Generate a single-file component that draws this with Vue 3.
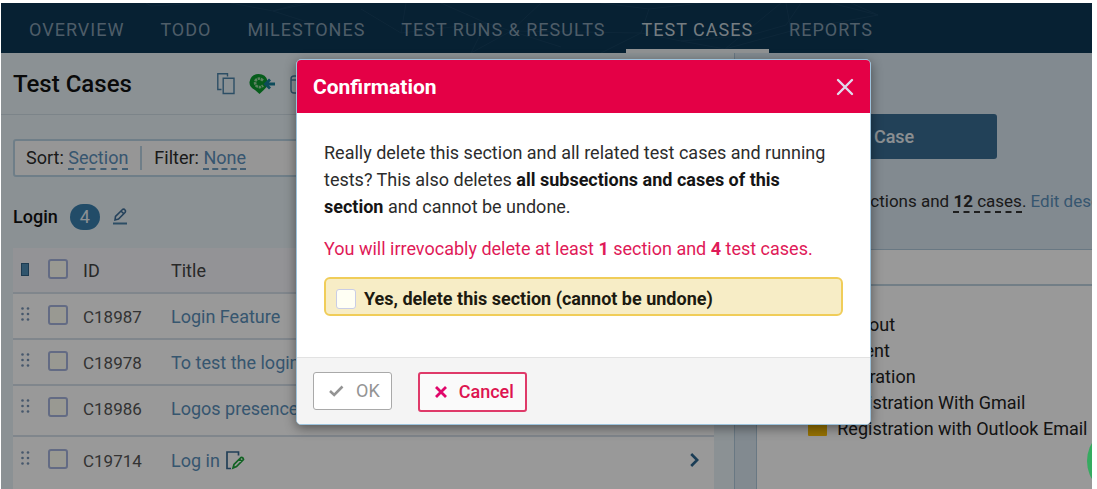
<script setup>
import { ref } from 'vue'

const navItems = [
  { label: 'Overview' },
  { label: 'Todo' },
  { label: 'Milestones' },
  { label: 'Test Runs & Results' },
  { label: 'Test Cases', active: true },
  { label: 'Reports' },
]

const cases = [
  { id: 'C18987', title: 'Login Feature' },
  { id: 'C18978', title: 'To test the login form' },
  { id: 'C18986', title: 'Logos presence on page', tall: true },
  { id: 'C19714', title: 'Log in', edited: true, tall: true, open: true },
]

const tree = [
  { label: 'Login' },
  { label: 'Checkout' },
  { label: 'Payment' },
  { label: 'Registration' },
  { label: 'Registration With Gmail', child: true },
  { label: 'Registration with Outlook Email', child: true },
]

const confirmed = ref(false)
</script>

<template>
  <div class="page">
    <div class="frame">
      <header class="topbar">
        <svg class="mesh" viewBox="0 0 1091 50" preserveAspectRatio="none" aria-hidden="true">
          <path d="M145 0 L150 3 L200 0 M230 0 L272 8 L310 0 M272 8 L300 0 M272 8 L340 30 M360 6 L400 30 L485 20 L440 0 M400 30 L405 0 M485 20 L510 28 L540 0 M485 20 L470 50 L510 28 L560 44 M510 28 L640 30 L648 6 L600 0 M640 30 L600 50 M640 30 L680 38 L724 46 L780 0 M680 38 L750 32 L785 22 L800 0 M648 6 L700 0 M724 46 L790 28 L877 12 L830 0 M790 28 L785 0 M877 12 L850 0" />
        </svg>
        <nav class="nav">
          <a v-for="item in navItems" :key="item.label" href="#" :class="{ active: item.active }">{{ item.label }}</a>
        </nav>
      </header>

      <div class="columns">
        <main class="main">
          <div class="titlebar">
            <h1>Test Cases</h1>
            <div class="tools">
              <button type="button" aria-label="Copy cases">
                <svg width="18" height="22" viewBox="0 0 18 22" fill="none" stroke="#4a82a8" stroke-width="1.4">
                  <path d="M4.5 16.5H.8V.8H10.5V3.5" />
                  <path d="M6.2 5.2H17V20.5H6.2z" />
                </svg>
              </button>
              <button type="button" aria-label="Import cases">
                <svg width="27" height="22" viewBox="0 0 27 22">
                  <path d="M9.500 1 Q17 1 18.500 8 L18.500 13 Q15 17 10.500 21 L6 17 Q0 14 .5 9 Q2 1 9.500 1z" fill="#0b9c2e" />
                  <path d="M14 7.500 Q10 4 7 7 Q5 10 7.500 13 Q11 15.500 14 12.500" fill="none" stroke="#9bd8a2" stroke-width="2.600" stroke-dasharray="2.500 .8" />
                  <path d="M26 11H17M21 6.500L16.500 11L21 15.500" fill="none" stroke="#177d98" stroke-width="2.800" />
                </svg>
              </button>
              <button type="button" aria-label="Export cases">
                <svg width="18" height="20" viewBox="0 0 18 20" fill="none" stroke="#4a82a8" stroke-width="1.400">
                  <rect x="1" y="2" width="16" height="17" rx="3" />
                  <path d="M1 6H17" />
                </svg>
              </button>
            </div>
          </div>

          <div class="content">
            <div class="filterbar">
              <span>Sort: <a href="#">Section</a></span>
              <span class="filter">Filter: <a href="#">None</a></span>
            </div>

            <div class="section-head">
              <h2>Login</h2>
              <span class="count">4</span>
              <button type="button" aria-label="Edit section">
                <svg width="16" height="17" viewBox="0 0 16 17" fill="none" stroke="#3f6f99" stroke-width="1.600">
                  <path d="M3 12 L3.500 8.500 L10.500 1.500 Q12 .500 13 2 Q14 3 13 4.500 L6.500 11 L3 12z M9 3 L11.500 5.500" />
                  <path d="M1 15.500H15" stroke="#4a82a8" stroke-width="2" />
                </svg>
              </button>
            </div>

            <table>
              <colgroup>
                <col class="c-drag" /><col class="c-check" /><col class="c-id" /><col /><col class="c-go" />
              </colgroup>
              <thead>
                <tr>
                  <th><i class="column-mark"></i></th>
                  <th><input type="checkbox" aria-label="Select all cases" /></th>
                  <th>ID</th>
                  <th>Title</th>
                  <th></th>
                </tr>
              </thead>
              <tbody>
                <tr v-for="c in cases" :key="c.id" :class="{ tall: c.tall, open: c.open }">
                  <td>
                    <svg class="grip" width="9" height="14" viewBox="0 0 9 14" fill="#7793b5">
                      <circle cx="1.500" cy="1.500" r="1.300" /><circle cx="7" cy="1.500" r="1.300" />
                      <circle cx="1.500" cy="7" r="1.300" /><circle cx="7" cy="7" r="1.300" />
                      <circle cx="1.500" cy="12.500" r="1.300" /><circle cx="7" cy="12.500" r="1.300" />
                    </svg>
                  </td>
                  <td><input type="checkbox" :aria-label="'Select ' + c.id" /></td>
                  <td class="id">{{ c.id }}</td>
                  <td>
                    <a href="#">{{ c.title }}</a>
                    <svg v-if="c.edited" class="note" width="19" height="19" viewBox="0 0 19 19" fill="none">
                      <path d="M5 17.500H1V1H12.500V4.500" stroke="#3a6a92" stroke-width="1.700" />
                      <path d="M7 17 L8 13.500 L15 6.500 Q17 6 17.500 8.500 L10.500 15.500 L7 17z M13.500 8 L16 10.500" stroke="#1ca53a" stroke-width="1.700" />
                    </svg>
                  </td>
                  <td>
                    <svg v-if="c.open" class="chevron" width="9" height="14" viewBox="0 0 9 14" fill="none" stroke="#2c668f" stroke-width="2.600">
                      <path d="M1.200 1 L7.200 7 L1.200 13" />
                    </svg>
                  </td>
                </tr>
              </tbody>
            </table>
          </div>
        </main>

        <aside class="side">
          <button type="button" class="add">Add Test Case</button>
          <p class="stats">Contains 3 sections and <a class="total" href="#"><b>12</b> cases</a>. <a href="#">Edit description</a></p>
          <div class="tree">
            <div class="tree-head"></div>
            <ul>
              <li v-for="n in tree" :key="n.label" :class="{ child: n.child }">
                <i class="folder"></i>{{ n.label }}
              </li>
            </ul>
          </div>
        </aside>
      </div>

      <div class="backdrop">
        <form class="dialog" role="dialog" aria-modal="true" aria-labelledby="dialog-title" @submit.prevent>
          <div class="dialog-head">
            <h2 id="dialog-title">Confirmation</h2>
            <button type="button" aria-label="Close">
              <svg width="18" height="18" viewBox="0 0 18 18" fill="none" stroke="#dfd9ec" stroke-width="2.400" stroke-linecap="round">
                <path d="M2 2 L16 16 M16 2 L2 16" />
              </svg>
            </button>
          </div>
          <div class="dialog-body">
            <p>Really delete this section and all related test cases and running tests? This also deletes <b>all subsections and cases of this section</b> and cannot be undone.</p>
            <p class="warn">You will irrevocably delete at least <b>1</b> section and <b>4</b> test cases.</p>
            <label class="confirm">
              <input v-model="confirmed" type="checkbox" />
              Yes, delete this section (cannot be undone)
            </label>
          </div>
          <div class="dialog-foot">
            <button type="submit" class="ok" :disabled="!confirmed">
              <svg width="15" height="12" viewBox="0 0 15 12" fill="none" stroke="#949494" stroke-width="2.600">
                <path d="M1 6 L5.200 10 L13.500 1.500" />
              </svg>
              OK
            </button>
            <button type="button" class="cancel">
              <svg width="12" height="12" viewBox="0 0 12 12" fill="none" stroke="#e0066a" stroke-width="2.800">
                <path d="M1 1 L11 11 M11 1 L1 11" />
              </svg>
              Cancel
            </button>
          </div>
        </form>
      </div>

      <button type="button" class="chat" aria-label="Open chat"></button>
    </div>
  </div>
</template>

<style>
body {
  background: #fff;
}
</style>

<style scoped>
* {
  box-sizing: border-box;
}

.page {
  height: 100vh;
  padding: 3px 5px 0 1px;
  font-family: Roboto, "Liberation Sans", sans-serif;
  font-size: 18px;
  line-height: 24px;
  color: #2c2c2c;
}

.frame {
  position: relative;
  display: flex;
  flex-direction: column;
  height: 100%;
  overflow: hidden;
}

h1,
h2,
p,
ul {
  margin: 0;
  padding: 0;
}

button {
  padding: 0;
  border: 0;
  background: none;
  font: inherit;
  cursor: pointer;
}

svg {
  display: block;
}

a {
  color: #5b8fba;
  text-decoration: none;
}

input[type='checkbox'] {
  appearance: none;
  display: block;
  width: 20px;
  height: 20px;
  margin: 0;
  border: 2px solid #a5b3dc;
  border-radius: 3px;
  background: #fffff4;
}

.topbar {
  position: relative;
  flex: none;
  background: #0d3755;
}

.mesh {
  position: absolute;
  inset: 0;
  width: 100%;
  height: 100%;
  fill: none;
  stroke: #2a5878;
  stroke-width: 1;
  opacity: 0.3;
}

.nav {
  position: relative;
  display: flex;
  gap: 4px;
  padding-left: 12px;
}

.nav a {
  height: 50px;
  padding: 15px 16px 0;
  border-bottom: 4px solid transparent;
  color: #829bae;
  letter-spacing: 1px;
  text-transform: uppercase;
  white-space: nowrap;
}

.nav a.active {
  border-color: #f0f4f6;
  color: #c3d0d8;
}

.columns {
  display: grid;
  grid-template-columns: minmax(0, 2.05fr) minmax(0, 1fr);
  flex: 1;
  min-height: 0;
}

.main {
  background: #e8f2f7;
}

.titlebar {
  display: flex;
  align-items: center;
  gap: 85px;
  height: 62px;
  padding-left: 12px;
  border-bottom: 1px solid #cfdde4;
}

h1 {
  font-size: 24px;
  font-weight: 500;
  color: #111;
}

.tools {
  display: flex;
  align-items: center;
  gap: 14px;
}

.content {
  padding: 24px 20px 0 12px;
}

.filterbar {
  display: flex;
  align-items: center;
  height: 38px;
  padding: 0 11px;
  border: 2px solid #b9d3e3;
  border-radius: 3px;
  background: #fafafa;
}

.filterbar a {
  border-bottom: 2px dashed #6f9dc0;
}

.filter {
  margin-left: 12px;
  padding-left: 12px;
  border-left: 2px solid #b9d3e3;
}

.section-head {
  display: flex;
  align-items: center;
  gap: 12px;
  height: 71px;
  padding-top: 8px;
}

.section-head h2 {
  font-size: 18px;
  font-weight: 500;
  color: #111;
}

.count {
  width: 30px;
  border-radius: 13px;
  background: #3a7fae;
  color: #e9f1f6;
  line-height: 26px;
  text-align: center;
}

table {
  width: 100%;
  border-spacing: 0;
  table-layout: fixed;
  background: #fff;
}

.c-drag {
  width: 35px;
}

.c-check {
  width: 35px;
}

.c-id {
  width: 88px;
}

.c-go {
  width: 24px;
}

th,
td {
  height: 46px;
  padding: 11px 0 0;
  border-bottom: 2px solid #d5e0e9;
  font-weight: 400;
  text-align: left;
  vertical-align: top;
  white-space: nowrap;
}

th {
  background: #f5f6fb;
  color: #444;
}

td input {
  margin-top: 1px;
}

th:first-child,
td:first-child {
  padding-left: 8px;
}

.tall td {
  height: 51px;
}

.open td {
  height: 60px;
  padding-top: 12px;
}

.id {
  font-size: 17px;
  color: #555;
}

.column-mark {
  display: block;
  width: 8px;
  height: 13px;
  margin-top: 4px;
  border: 1px solid #2f6286;
  background: #4f8db5;
}

.grip {
  margin-top: 2px;
}

.chevron {
  margin-top: 4px;
}

.note {
  display: inline-block;
  margin-left: 6px;
  vertical-align: -3px;
}

.side {
  display: flex;
  flex-direction: column;
  align-items: flex-start;
  padding: 61px 0 0 21px;
  border-left: 1px solid #afc8da;
  background: #d9e6f1;
}

.add {
  width: 241px;
  height: 45px;
  flex: none;
  padding-right: 83px;
  border-radius: 3px;
  background: #3a6d93;
  color: #e8eff4;
  font-weight: 500;
  text-align: right;
}

.stats {
  flex: none;
  padding: 30px 0 36px 11px;
  font-size: 17px;
  white-space: nowrap;
}

.total {
  border-bottom: 2px dashed #333;
  color: inherit;
}

.tree {
  flex: 1;
  align-self: stretch;
  border-top: 1px solid #afc8da;
  border-left: 1px solid #afc8da;
  background: #fff;
}

.tree-head {
  height: 36px;
  border-bottom: 2px solid #bed2e0;
}

.tree ul {
  list-style: none;
  padding-left: 33px;
}

.tree li {
  display: flex;
  align-items: center;
  gap: 10px;
  height: 26px;
  white-space: nowrap;
  color: #222;
}

.tree li.child {
  padding-left: 18px;
}

.folder {
  flex: none;
  width: 19px;
  height: 13px;
  border-radius: 1px;
  background: #f9bd04;
}

.backdrop {
  position: absolute;
  inset: 0;
  display: flex;
  align-items: flex-start;
  justify-content: center;
  padding: 56px 0 0 74px;
  background: rgba(0, 0, 0, 0.4);
}

.dialog {
  width: 575px;
  overflow: hidden;
  border: 1px solid #9dc3dc;
  border-radius: 5px;
  background: #fff;
  box-shadow: 0 3px 12px rgba(0, 0, 0, 0.45);
}

.dialog-head {
  display: flex;
  align-items: center;
  justify-content: space-between;
  height: 53px;
  padding: 0 16px;
  background: #e40046;
  color: #fff;
}

.dialog-head h2 {
  font-size: 21px;
  font-weight: 700;
}

.dialog-body {
  padding: 26px 27px 41px;
}

.dialog-body p {
  margin-bottom: 15px;
  line-height: 27px;
}

.dialog-body b {
  color: #151515;
}

.dialog-body .warn,
.dialog-body .warn b {
  color: #df1a58;
}

.confirm {
  display: flex;
  align-items: center;
  gap: 8px;
  height: 39px;
  padding: 4px 10px 0;
  border: 2px solid #f0cd59;
  border-radius: 6px;
  background: #f7edc6;
  color: #1c1a10;
  font-weight: 700;
}

.confirm input {
  border: 1px solid #c9cde6;
}

.dialog-foot {
  display: flex;
  align-items: flex-start;
  gap: 26px;
  height: 67px;
  padding: 14px 16px;
  border-top: 1px solid #e2e2e2;
  background: #f4f4f4;
}

.dialog-foot button {
  display: flex;
  align-items: center;
  gap: 12px;
  height: 38px;
  padding: 0 11px 0 15px;
  border: 1px solid #a9a9a9;
  border-radius: 3px;
  background: #fff;
}

.dialog-foot .ok {
  color: #949494;
}

.dialog-foot .cancel {
  height: 40px;
  padding-left: 15px;
  border: 2px solid #df3a69;
  background: #fafafa;
  color: #dd1450;
  font-weight: 500;
}

.chat {
  position: absolute;
  right: -65px;
  bottom: -7px;
  width: 70px;
  height: 70px;
  border-radius: 50%;
  background: #35ab60;
}
</style>
